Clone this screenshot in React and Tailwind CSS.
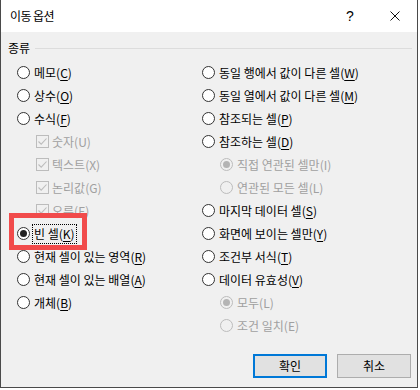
import React from 'react';

const FONT = { fontFamily: '"Noto Sans CJK KR", "Noto Sans", sans-serif' };

const leftRows = [
  { type: 'radio', label: '메모', k: 'C' },
  { type: 'radio', label: '상수', k: 'O' },
  { type: 'radio', label: '수식', k: 'F' },
  { type: 'check', label: '숫자', k: 'U' },
  { type: 'check', label: '텍스트', k: 'X' },
  { type: 'check', label: '논리값', k: 'G' },
  { type: 'check', label: '오류', k: 'E' },
  { type: 'radio', label: '빈 셀', k: 'K', checked: true, focus: true },
  { type: 'radio', label: '현재 셀이 있는 영역', k: 'R' },
  { type: 'radio', label: '현재 셀이 있는 배열', k: 'A' },
  { type: 'radio', label: '개체', k: 'B' },
];

const rightRows = [
  { type: 'radio', label: '동일 행에서 값이 다른 셀', k: 'W' },
  { type: 'radio', label: '동일 열에서 값이 다른 셀', k: 'M' },
  { type: 'radio', label: '참조되는 셀', k: 'P' },
  { type: 'radio', label: '참조하는 셀', k: 'D' },
  { type: 'sub', label: '직접 연관된 셀만', k: 'I', checked: true },
  { type: 'sub', label: '연관된 모든 셀', k: 'L' },
  { type: 'radio', label: '마지막 데이터 셀', k: 'S' },
  { type: 'radio', label: '화면에 보이는 셀만', k: 'Y' },
  { type: 'radio', label: '조건부 서식', k: 'T' },
  { type: 'radio', label: '데이터 유효성', k: 'V' },
  { type: 'sub', label: '모두', k: 'L', checked: true },
  { type: 'sub', label: '조건 일치', k: 'E' },
];

const Radio = ({ checked, disabled }) => (
  <span
    className={`w-[13px] h-[13px] rounded-full border flex items-center justify-center shrink-0 ${
      disabled ? 'border-[#bcbcbc] bg-[#f0f0f0]' : 'border-[#333333] bg-white'
    }`}
  >
    {checked && (
      <span className={`w-[7px] h-[7px] rounded-full ${disabled ? 'bg-[#b4b4b4]' : 'bg-[#222222]'}`} />
    )}
  </span>
);

const Check = () => (
  <span className="w-[13px] h-[13px] border border-[#bcbcbc] bg-[#f0f0f0] flex items-center justify-center shrink-0">
    <svg width="11" height="11" viewBox="0 0 11 11">
      <path d="M1.5 5.5 L4.2 8.2 L9.5 2.5" fill="none" stroke="#bcbcbc" strokeWidth="1.1" />
    </svg>
  </span>
);

const Row = ({ row }) => {
  const disabled = row.type !== 'radio';
  const text = disabled ? (
    <span>
      {row.label}({row.k})
    </span>
  ) : (
    <span>
      {row.label}(<span className="underline underline-offset-[2px]">{row.k}</span>)
    </span>
  );

  return (
    <div
      className={`h-[23px] flex items-center ${
        row.type === 'check' ? 'pl-[19px] gap-[3px]' : row.type === 'sub' ? 'pl-[18px] gap-[4px]' : 'gap-[4px]'
      } ${disabled ? 'text-[#a0a0a0]' : 'text-black'}`}
    >
      {row.type === 'check' ? <Check /> : <Radio checked={row.checked} disabled={disabled} />}
      {row.focus ? (
        <span className="-ml-[2px] px-[1px] h-[20px] leading-[18px] border border-dotted border-black">{text}</span>
      ) : (
        text
      )}
    </div>
  );
};

export default function App() {
  return (
    <div className="w-[420px] h-[390px] bg-white text-[12px]" style={FONT}>
      <div className="relative w-[418px] h-[388px] flex flex-col border-l border-r border-b border-[#4a4a4a]">
        {/* 제목 표시줄 */}
        <div className="h-[32px] bg-white flex items-center pl-[9px] pr-[17px] shrink-0">
          <span className="text-[12px] tracking-[-0.6px] text-black">이동 옵션</span>
          <span className="ml-auto w-[10px] text-center text-[14px] text-black" style={{ fontFamily: '"Liberation Sans", sans-serif' }}>
            ?
          </span>
          <svg className="ml-[35px]" width="10" height="10" viewBox="0 0 10 10">
            <path d="M0.5 0.5 L9.5 9.5 M9.5 0.5 L0.5 9.5" stroke="#111" strokeWidth="1" />
          </svg>
        </div>

        {/* 본문 */}
        <div className="flex-1 bg-[#f0f0f0] pt-[8px] flex flex-col">
          <div className="h-[16px] flex items-center pl-[7px] pr-[5px] leading-[16px]">
            <span className="text-black">종류</span>
            <span className="flex-1 h-px bg-[#dcdcdc] ml-[5px]" />
          </div>

          <div className="mt-[5px] flex h-[276px] leading-[23px]">
            <div className="w-[201px] pl-[16px] flex flex-col">
              {leftRows.map((r, i) => (
                <Row key={i} row={r} />
              ))}
            </div>
            <div className="flex-1 flex flex-col">
              {rightRows.map((r, i) => (
                <Row key={i} row={r} />
              ))}
            </div>
          </div>

          <div className="mt-[17px] flex justify-end gap-[10px] pr-[6px]">
            <button className="w-[74px] h-[24px] border-2 border-[#0078d7] bg-[#e1e1e1] text-black text-[12px] leading-none">
              확인
            </button>
            <button className="w-[74px] h-[24px] border border-[#adadad] bg-[#e1e1e1] text-black text-[12px] leading-none">
              취소
            </button>
          </div>
        </div>

        {/* 강조 표시 */}
        <div className="absolute left-[8px] top-[213px] w-[78px] h-[37px] border-[5px] border-[#f14b4b]" />
      </div>
    </div>
  );
}
